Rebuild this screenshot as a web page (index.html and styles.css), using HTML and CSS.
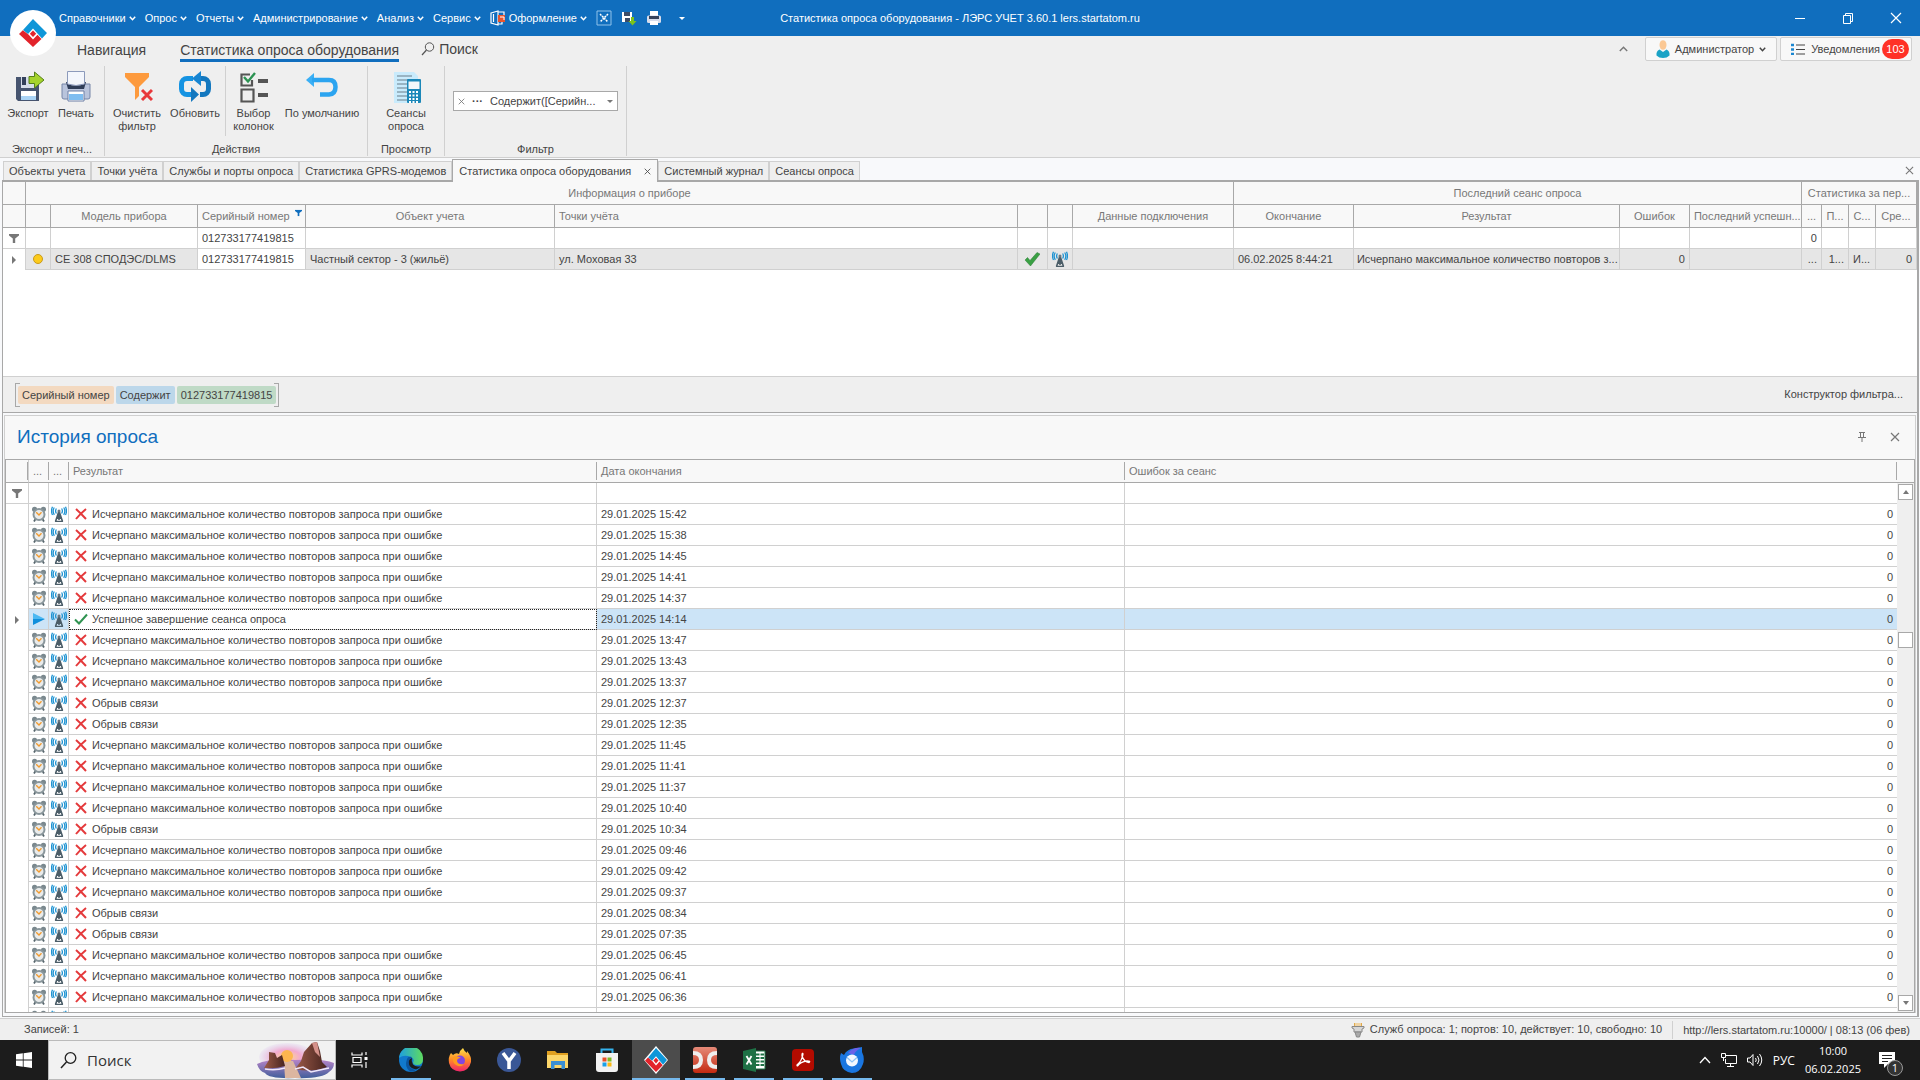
FILE: index.html
```html
<!DOCTYPE html>
<html lang="ru">
<head>
<meta charset="utf-8">
<title>Статистика опроса оборудования - ЛЭРС УЧЕТ</title>
<link rel="stylesheet" href="styles.css">
</head>
<body>
<svg class="sprite" aria-hidden="true">
  <symbol id="chev" viewBox="0 0 7 5"><path d="M.8.8 3.5 3.7 6.2.8" fill="none" stroke="currentColor" stroke-width="1.5"/></symbol>
  <symbol id="cross" viewBox="0 0 10 10"><path d="M1 1 9 9M9 1 1 9" fill="none" stroke="currentColor" stroke-width="1.2"/></symbol>
  <symbol id="funnel" viewBox="0 0 10 9"><path d="M0 0H10V1.5L6.2 4.5V9H3.8V4.5L0 1.5Z" fill="currentColor"/></symbol>
  <symbol id="row-mark" viewBox="0 0 4 8"><path d="M0 0 4 4 0 8Z" fill="currentColor"/></symbol>
  <symbol id="logo" viewBox="0 0 28 28"><path d="M4 11 14 0 28 14 23 19.500 14 9.500 9 15Z" fill="#0f96d8"/><path d="M3.800 11.200 0 15 14 28 22.500 20 18.500 15.800 14 20.500 9.500 15.500Z" fill="#e2232b"/><path d="M14 11.500 17.200 14.700 14 18 10.800 14.700Z" fill="#e2232b"/></symbol>
  <symbol id="antenna" viewBox="0 0 16 16"><path d="M8 5 4.500 15.500M8 5 11.500 15.500M8 6V14M5.500 12.500 10 9.500M10.500 12.500 6 9.500M4 15.500H12" fill="none" stroke="#4b5d68" stroke-width="1.600"/><circle cx="8" cy="5" r="1.500" fill="#6b7780"/><path d="M5.400 2.500Q3.800 5 5.400 7.500M3.300 1.500Q1 5 3.300 8.800M10.600 2.500Q12.200 5 10.600 7.500M12.700 1.500Q15 5 12.700 8.800M1.500.800Q-.500 5 1.500 9M14.500.800Q16.500 5 14.500 9" fill="none" stroke="#1e93d2" stroke-width="1.300"/></symbol>
  <symbol id="clock" viewBox="0 0 16 16"><path d="M4.500 13 3 15.500M11.500 13 13 15.500" stroke="#56656c" stroke-width="1.800"/><circle cx="3.600" cy="3.300" r="2.600" fill="#7a888e"/><circle cx="12.400" cy="3.300" r="2.600" fill="#7a888e"/><circle cx="8" cy="8.500" r="5.500" fill="#e9ebeb" stroke="#8a979c" stroke-width="2"/><path d="M5.200 6.200 8 9 10.500 6.300" fill="none" stroke="#f09a2e" stroke-width="1.300"/></symbol>
  <symbol id="fail" viewBox="0 0 12 12"><path d="M1 1Q6 5.500 11 11M11 1Q5 6 1 11" fill="none" stroke="#e43a3c" stroke-width="2"/></symbol>
  <symbol id="ok" viewBox="0 0 14 12"><path d="M1 6.500 5 10.500 13 1.500" fill="none" stroke="#2e9350" stroke-width="2"/></symbol>
  <symbol id="play" viewBox="0 0 12 12"><path d="M0 0 12 6H0Z" fill="#4bb8f2"/><path d="M0 12 12 6H0Z" fill="#0f8fdc"/></symbol>
</svg>

<header class="titlebar">
  <button class="app-logo" aria-label="Меню приложения"><svg width="28" height="28"><use href="#logo"/></svg></button>
  <nav class="menu">
    <button>Справочники<svg width="7" height="5"><use href="#chev"/></svg></button>
    <button>Опрос<svg width="7" height="5"><use href="#chev"/></svg></button>
    <button>Отчеты<svg width="7" height="5"><use href="#chev"/></svg></button>
    <button>Администрирование<svg width="7" height="5"><use href="#chev"/></svg></button>
    <button>Анализ<svg width="7" height="5"><use href="#chev"/></svg></button>
    <button>Сервис<svg width="7" height="5"><use href="#chev"/></svg></button>
    <button><svg width="16" height="16" viewBox="0 0 16 16"><path d="M1 3 8 1V15L1 13ZM3.500 4V12M8 2H14V5M8 14H12V12" fill="none" stroke="#fff" stroke-width="1.200"/><rect x="8" y="5" width="7" height="7" fill="#e8552d"/><path d="M10 7H14V10" fill="none" stroke="#fff"/></svg>Оформление<svg width="7" height="5"><use href="#chev"/></svg></button>
    <button aria-label="Закрыть все"><svg width="16" height="16" viewBox="0 0 16 16"><path d="M1 1H15V15H1Z" fill="none" stroke="#8fc2ea"/><path d="M4 4 12 12M12 4 4 12" stroke="#fff" stroke-width="1.500" stroke-dasharray="2 .800"/></svg></button>
    <button aria-label="Экспорт"><svg width="16" height="16" viewBox="0 0 16 16"><path d="M1 2H11V12H1Z" fill="#fff"/><path d="M3 2H9V6H3ZM4 8H9V12H4Z" fill="#3d4c66"/><path d="M10 7H13V11H15.500L11.500 15.500 7.500 11H10Z" fill="#7cc21e"/></svg></button>
    <button aria-label="Печать"><svg width="16" height="16" viewBox="0 0 16 16"><path d="M4 1H12V6H4Z" fill="#fff"/><rect x="1" y="5.500" width="14" height="7.500" rx="1.500" fill="#d6dceb"/><path d="M3 6H13V9H3Z" fill="#37435c"/><path d="M4 11H12V15H4Z" fill="#fff"/></svg></button>
    <button aria-label="Настройка панели"><svg width="6" height="3" viewBox="0 0 6 3"><path d="M0 0H6L3 3Z" fill="#fff"/></svg></button>
  </nav>
  <h1>Статистика опроса оборудования - ЛЭРС УЧЕТ 3.60.1 lers.startatom.ru</h1>
  <div class="win-buttons">
    <button aria-label="Свернуть"><svg width="12" height="12"><path d="M1 6.500H11" stroke="#fff"/></svg></button>
    <button aria-label="Восстановить"><svg width="12" height="12"><path d="M1.500 3.500H8.500V11.500H1.500ZM3.500 3.500V1.500H10.500V9.500H8.500" fill="none" stroke="#fff"/></svg></button>
    <button aria-label="Закрыть"><svg width="12" height="12"><path d="M1 1 11 11M11 1 1 11" stroke="#fff" stroke-width="1.200"/></svg></button>
  </div>
</header>

<div class="ribbon-tabs">
  <a href="#">Навигация</a>
  <a href="#" class="current">Статистика опроса оборудования</a>
  <a href="#" class="find"><svg width="14" height="14" viewBox="0 0 14 14"><circle cx="8.500" cy="5" r="4.200" fill="none" stroke="#555"/><path d="M5.500 8 1 13" stroke="#555" stroke-width="1.200"/></svg>Поиск</a>
  <div class="account">
    <button class="collapse" aria-label="Свернуть ленту"><svg width="9" height="6" viewBox="0 0 9 6"><path d="M.8 5 4.500 1.200 8.200 5" fill="none" stroke="#777" stroke-width="1.400"/></svg></button>
    <button class="box"><svg width="14" height="18" viewBox="0 0 14 18"><ellipse cx="7" cy="5" rx="3.500" ry="4.800" fill="#fbc894"/><path d="M3.500 9.500 7 12 10.500 9.500Q14 11 13.500 15.500 11 18 7 18 3 18 .500 15.500 0 11 3.500 9.500Z" fill="#1ba3c6"/></svg>Администратор<svg width="7" height="5"><use href="#chev"/></svg></button>
    <button class="box"><svg width="14" height="12" viewBox="0 0 14 12"><path d="M5 2H14M5 6.500H14M5 11H14" stroke="#444"/><path d="M0 2H3M0 6.500H3M0 11H3" stroke="#1a86d0" stroke-width="2.500"/></svg>Уведомления<span class="count">103</span></button>
  </div>
</div>

<section class="ribbon">
  <div class="group">
    <div class="tools">
      <button class="w48"><svg width="32" height="32" viewBox="0 0 32 32"><path d="M4 6H27V30H6L4 28Z" fill="#46546f"/><path d="M9 6H23V17H9Z" fill="#d7deea"/><path d="M10 6H14V14H10Z" fill="#33405a"/><path d="M9 20H24V29H9Z" fill="#fff"/><path d="M9 25H24V29H9Z" fill="#a9d3f5"/><path d="M17 5.500H22.500V1L32 9 22.500 17V12.500H17Z" fill="#a5d32c" stroke="#557f1b"/></svg>Экспорт</button>
      <button class="w48"><svg width="32" height="32" viewBox="0 0 32 32"><path d="M2 13H30V26Q30 28 28 28H4Q2 28 2 26Z" fill="#b9c4dc" stroke="#7786a8"/><path d="M6 11H26L24 18H8Z" fill="#2f3d58"/><path d="M7.500.500H24.500V13Q16 16 7.500 13Z" fill="#f3f6fc" stroke="#8c9abb"/><path d="M8 20H24V30H8Z" fill="#fff" stroke="#6d7fa5"/><path d="M9 23H23V29H9Z" fill="#7fbdf0"/></svg>Печать</button>
    </div>
    <p>Экспорт и печ...</p>
  </div>
  <div class="group">
    <div class="tools">
      <button class="w56"><svg width="32" height="32" viewBox="0 0 32 32"><path d="M4 2H28V6L18 16V25L14 29V16L4 6Z" fill="#fd9a3d"/><path d="M21 19 31 29M31 19 21 29" stroke="#e8383b" stroke-width="3"/></svg>Очистить<br>фильтр</button>
      <button class="w60"><svg width="32" height="32" viewBox="0 0 32 32"><path d="M14 7.500H8A5.500 5.500 0 0 0 2.500 13V18A5.500 5.500 0 0 0 8 23.500H14" fill="none" stroke="#1593e2" stroke-width="5"/><path d="M18 7.500H24A5.500 5.500 0 0 1 29.500 13V18A5.500 5.500 0 0 1 24 23.500H21" fill="none" stroke="#1478bf" stroke-width="5"/><path d="M22 0V15L13 7.500Z" fill="#1785d2"/><path d="M12 0H14.500V5H12ZM10 10H13V12H10Z" fill="#efefef"/><path d="M12 16V31L20 23.500Z" fill="#1478bf"/></svg>Обновить</button>
      <button class="w56 split"><svg width="32" height="32" viewBox="0 0 32 32"><path d="M14 9V14.500H3.500V3.500H12M3.500 18.500H15.500V30.500H3.500Z" fill="none" stroke="#555" stroke-width="2.200"/><path d="M6 6 10 10.500 17 2" fill="none" stroke="#2c9352" stroke-width="2.400"/><path d="M20 10H30M20 24H30" stroke="#555" stroke-width="4"/></svg>Выбор<br>колонок</button>
      <button class="w82"><svg width="32" height="32" viewBox="0 0 32 32"><path d="M0 9 8 2V16Z" fill="#3aaff5"/><path d="M6 9H23Q29.500 9 29.500 16T23 23.500H14" fill="none" stroke="#2ba4f0" stroke-width="4.500"/></svg>По умолчанию</button>
    </div>
    <p>Действия</p>
  </div>
  <div class="group">
    <div class="tools">
      <button class="w68"><svg width="32" height="32" viewBox="0 0 32 32"><path d="M4 1H24L28 5V32H4Z" fill="#c9ebfc"/><path d="M7 5H22M7 9H22M7 13H19M7 17H19M7 21H19M7 25H19M7 29H19" stroke="#6b7f8a" stroke-width="1.200"/><rect x="17" y="8" width="14" height="24" rx="1" fill="#1b87b8"/><path d="M18.500 10.500H29.500V18H18.500Z" fill="#f3f8fa"/><path d="M19 21H29M19 24.500H29M19 28H29M19 31H29" stroke="#fff" stroke-width="2" stroke-dasharray="2 1.500"/></svg>Сеансы<br>опроса</button>
    </div>
    <p>Просмотр</p>
  </div>
  <div class="group filter-group">
    <div class="tools">
      <button class="combo"><svg width="7" height="7" viewBox="0 0 10 10"><use href="#cross"/></svg><b>···</b><span>Содержит([Серийн...</span><svg width="6" height="3" viewBox="0 0 6 3"><path d="M0 0H6L3 3Z" fill="#777"/></svg></button>
    </div>
    <p>Фильтр</p>
  </div>
</section>

<nav class="doc-tabs">
  <a href="#">Объекты учета</a>
  <a href="#">Точки учёта</a>
  <a href="#">Службы и порты опроса</a>
  <a href="#">Статистика GPRS-модемов</a>
  <a href="#" class="current">Статистика опроса оборудования<svg width="7" height="7" viewBox="0 0 10 10"><use href="#cross"/></svg></a>
  <a href="#">Системный журнал</a>
  <a href="#">Сеансы опроса</a>
  <button aria-label="Закрыть вкладку"><svg width="9" height="9" viewBox="0 0 10 10"><use href="#cross"/></svg></button>
</nav>

<main>
  <div class="devices">
    <table>
      <colgroup><col class="c23"><col class="c25"><col class="c147"><col class="c108"><col class="c249"><col><col class="c30"><col class="c25"><col class="c161"><col class="c120"><col class="c266"><col class="c70"><col class="c112"><col class="c20"><col class="c27"><col class="c27"><col class="c41"></colgroup>
      <thead>
        <tr><th></th><th colspan="8">Информация о приборе</th><th colspan="4">Последний сеанс опроса</th><th colspan="4">Статистика за пер...</th></tr>
        <tr><th></th><th></th><th>Модель прибора</th><th class="filtered">Серийный номер<svg width="7" height="8" viewBox="0 0 10 9"><use href="#funnel"/></svg></th><th>Объект учета</th><th class="left">Точки учёта</th><th></th><th></th><th>Данные подключения</th><th>Окончание</th><th>Результат</th><th>Ошибок</th><th>Последний успешн...</th><th>...</th><th>П...</th><th>С...</th><th>Сре...</th></tr>
      </thead>
      <tbody>
        <tr class="search"><td class="mark"><svg width="10" height="9"><use href="#funnel"/></svg></td><td></td><td></td><td><input type="text" value="012733177419815" aria-label="Серийный номер"></td><td></td><td></td><td></td><td></td><td></td><td></td><td></td><td></td><td></td><td class="num">0</td><td></td><td></td><td></td></tr>
        <tr class="active"><td class="mark"><svg width="4" height="8"><use href="#row-mark"/></svg></td><td class="pic"><i class="dot"></i></td><td>СЕ 308 СПОДЭС/DLMS</td><td class="plain">012733177419815</td><td>Частный сектор - 3 (жильё)</td><td>ул. Моховая 33</td><td class="pic"><svg width="16" height="14" viewBox="0 0 16 14"><path d="M1 8 3.500 5.500 6 8.500 13 .500 16 2 6.500 14Z" fill="#3aa044" stroke="#2a7d34" stroke-width=".5"/></svg></td><td class="pic"><svg width="16" height="16"><use href="#antenna"/></svg></td><td></td><td>06.02.2025 8:44:21</td><td class="tight">Исчерпано максимальное количество повторов з...</td><td class="num">0</td><td></td><td class="num">...</td><td class="num">1...</td><td>И...</td><td class="num">0</td></tr>
      </tbody>
    </table>
  </div>
  <div class="criteria">
    <div class="terms"><span class="field">Серийный номер</span><span class="oper">Содержит</span><span class="value">012733177419815</span></div>
    <button>Конструктор фильтра...</button>
  </div>

  <section class="history">
    <div class="history-head">
      <h2>История опроса</h2>
      <button aria-label="Закрепить"><svg width="8" height="10" viewBox="0 0 8 10"><path d="M1 .500H7M2.500 .500V5M5.500 .500V5M0 5.500H8M4 5.500V10" fill="none" stroke="#777"/></svg></button>
      <button aria-label="Закрыть"><svg width="10" height="10"><use href="#cross"/></svg></button>
    </div>
    <div class="history-grid">
      <table>
        <colgroup><col class="c23"><col class="c20"><col class="c20"><col class="c528"><col class="c528"><col><col class="c17"></colgroup>
        <thead><tr><th class="edge"></th><th>...</th><th>...</th><th>Результат</th><th>Дата окончания</th><th>Ошибок за сеанс</th><th class="end"></th></tr></thead>
        <tbody>
          <tr class="search"><td class="mark"><svg width="10" height="9"><use href="#funnel"/></svg></td><td></td><td></td><td></td><td></td><td></td><td></td></tr>
          <tr><td></td><td class="pic"><svg width="16" height="16"><use href="#clock"/></svg></td><td class="pic"><svg width="16" height="16"><use href="#antenna"/></svg></td><td class="res"><svg width="14" height="12"><use href="#fail"/></svg>Исчерпано максимальное количество повторов запроса при ошибке</td><td>29.01.2025 15:42</td><td class="num">0</td><td></td></tr>
          <tr><td></td><td class="pic"><svg width="16" height="16"><use href="#clock"/></svg></td><td class="pic"><svg width="16" height="16"><use href="#antenna"/></svg></td><td class="res"><svg width="14" height="12"><use href="#fail"/></svg>Исчерпано максимальное количество повторов запроса при ошибке</td><td>29.01.2025 15:38</td><td class="num">0</td><td></td></tr>
          <tr><td></td><td class="pic"><svg width="16" height="16"><use href="#clock"/></svg></td><td class="pic"><svg width="16" height="16"><use href="#antenna"/></svg></td><td class="res"><svg width="14" height="12"><use href="#fail"/></svg>Исчерпано максимальное количество повторов запроса при ошибке</td><td>29.01.2025 14:45</td><td class="num">0</td><td></td></tr>
          <tr><td></td><td class="pic"><svg width="16" height="16"><use href="#clock"/></svg></td><td class="pic"><svg width="16" height="16"><use href="#antenna"/></svg></td><td class="res"><svg width="14" height="12"><use href="#fail"/></svg>Исчерпано максимальное количество повторов запроса при ошибке</td><td>29.01.2025 14:41</td><td class="num">0</td><td></td></tr>
          <tr><td></td><td class="pic"><svg width="16" height="16"><use href="#clock"/></svg></td><td class="pic"><svg width="16" height="16"><use href="#antenna"/></svg></td><td class="res"><svg width="14" height="12"><use href="#fail"/></svg>Исчерпано максимальное количество повторов запроса при ошибке</td><td>29.01.2025 14:37</td><td class="num">0</td><td></td></tr>
          <tr class="selected"><td class="mark"><svg width="4" height="8"><use href="#row-mark"/></svg></td><td class="pic"><svg width="12" height="12"><use href="#play"/></svg></td><td class="pic"><svg width="16" height="16"><use href="#antenna"/></svg></td><td class="res focus"><svg width="14" height="12"><use href="#ok"/></svg>Успешное завершение сеанса опроса</td><td>29.01.2025 14:14</td><td class="num">0</td><td></td></tr>
          <tr><td></td><td class="pic"><svg width="16" height="16"><use href="#clock"/></svg></td><td class="pic"><svg width="16" height="16"><use href="#antenna"/></svg></td><td class="res"><svg width="14" height="12"><use href="#fail"/></svg>Исчерпано максимальное количество повторов запроса при ошибке</td><td>29.01.2025 13:47</td><td class="num">0</td><td></td></tr>
          <tr><td></td><td class="pic"><svg width="16" height="16"><use href="#clock"/></svg></td><td class="pic"><svg width="16" height="16"><use href="#antenna"/></svg></td><td class="res"><svg width="14" height="12"><use href="#fail"/></svg>Исчерпано максимальное количество повторов запроса при ошибке</td><td>29.01.2025 13:43</td><td class="num">0</td><td></td></tr>
          <tr><td></td><td class="pic"><svg width="16" height="16"><use href="#clock"/></svg></td><td class="pic"><svg width="16" height="16"><use href="#antenna"/></svg></td><td class="res"><svg width="14" height="12"><use href="#fail"/></svg>Исчерпано максимальное количество повторов запроса при ошибке</td><td>29.01.2025 13:37</td><td class="num">0</td><td></td></tr>
          <tr><td></td><td class="pic"><svg width="16" height="16"><use href="#clock"/></svg></td><td class="pic"><svg width="16" height="16"><use href="#antenna"/></svg></td><td class="res"><svg width="14" height="12"><use href="#fail"/></svg>Обрыв связи</td><td>29.01.2025 12:37</td><td class="num">0</td><td></td></tr>
          <tr><td></td><td class="pic"><svg width="16" height="16"><use href="#clock"/></svg></td><td class="pic"><svg width="16" height="16"><use href="#antenna"/></svg></td><td class="res"><svg width="14" height="12"><use href="#fail"/></svg>Обрыв связи</td><td>29.01.2025 12:35</td><td class="num">0</td><td></td></tr>
          <tr><td></td><td class="pic"><svg width="16" height="16"><use href="#clock"/></svg></td><td class="pic"><svg width="16" height="16"><use href="#antenna"/></svg></td><td class="res"><svg width="14" height="12"><use href="#fail"/></svg>Исчерпано максимальное количество повторов запроса при ошибке</td><td>29.01.2025 11:45</td><td class="num">0</td><td></td></tr>
          <tr><td></td><td class="pic"><svg width="16" height="16"><use href="#clock"/></svg></td><td class="pic"><svg width="16" height="16"><use href="#antenna"/></svg></td><td class="res"><svg width="14" height="12"><use href="#fail"/></svg>Исчерпано максимальное количество повторов запроса при ошибке</td><td>29.01.2025 11:41</td><td class="num">0</td><td></td></tr>
          <tr><td></td><td class="pic"><svg width="16" height="16"><use href="#clock"/></svg></td><td class="pic"><svg width="16" height="16"><use href="#antenna"/></svg></td><td class="res"><svg width="14" height="12"><use href="#fail"/></svg>Исчерпано максимальное количество повторов запроса при ошибке</td><td>29.01.2025 11:37</td><td class="num">0</td><td></td></tr>
          <tr><td></td><td class="pic"><svg width="16" height="16"><use href="#clock"/></svg></td><td class="pic"><svg width="16" height="16"><use href="#antenna"/></svg></td><td class="res"><svg width="14" height="12"><use href="#fail"/></svg>Исчерпано максимальное количество повторов запроса при ошибке</td><td>29.01.2025 10:40</td><td class="num">0</td><td></td></tr>
          <tr><td></td><td class="pic"><svg width="16" height="16"><use href="#clock"/></svg></td><td class="pic"><svg width="16" height="16"><use href="#antenna"/></svg></td><td class="res"><svg width="14" height="12"><use href="#fail"/></svg>Обрыв связи</td><td>29.01.2025 10:34</td><td class="num">0</td><td></td></tr>
          <tr><td></td><td class="pic"><svg width="16" height="16"><use href="#clock"/></svg></td><td class="pic"><svg width="16" height="16"><use href="#antenna"/></svg></td><td class="res"><svg width="14" height="12"><use href="#fail"/></svg>Исчерпано максимальное количество повторов запроса при ошибке</td><td>29.01.2025 09:46</td><td class="num">0</td><td></td></tr>
          <tr><td></td><td class="pic"><svg width="16" height="16"><use href="#clock"/></svg></td><td class="pic"><svg width="16" height="16"><use href="#antenna"/></svg></td><td class="res"><svg width="14" height="12"><use href="#fail"/></svg>Исчерпано максимальное количество повторов запроса при ошибке</td><td>29.01.2025 09:42</td><td class="num">0</td><td></td></tr>
          <tr><td></td><td class="pic"><svg width="16" height="16"><use href="#clock"/></svg></td><td class="pic"><svg width="16" height="16"><use href="#antenna"/></svg></td><td class="res"><svg width="14" height="12"><use href="#fail"/></svg>Исчерпано максимальное количество повторов запроса при ошибке</td><td>29.01.2025 09:37</td><td class="num">0</td><td></td></tr>
          <tr><td></td><td class="pic"><svg width="16" height="16"><use href="#clock"/></svg></td><td class="pic"><svg width="16" height="16"><use href="#antenna"/></svg></td><td class="res"><svg width="14" height="12"><use href="#fail"/></svg>Обрыв связи</td><td>29.01.2025 08:34</td><td class="num">0</td><td></td></tr>
          <tr><td></td><td class="pic"><svg width="16" height="16"><use href="#clock"/></svg></td><td class="pic"><svg width="16" height="16"><use href="#antenna"/></svg></td><td class="res"><svg width="14" height="12"><use href="#fail"/></svg>Обрыв связи</td><td>29.01.2025 07:35</td><td class="num">0</td><td></td></tr>
          <tr><td></td><td class="pic"><svg width="16" height="16"><use href="#clock"/></svg></td><td class="pic"><svg width="16" height="16"><use href="#antenna"/></svg></td><td class="res"><svg width="14" height="12"><use href="#fail"/></svg>Исчерпано максимальное количество повторов запроса при ошибке</td><td>29.01.2025 06:45</td><td class="num">0</td><td></td></tr>
          <tr><td></td><td class="pic"><svg width="16" height="16"><use href="#clock"/></svg></td><td class="pic"><svg width="16" height="16"><use href="#antenna"/></svg></td><td class="res"><svg width="14" height="12"><use href="#fail"/></svg>Исчерпано максимальное количество повторов запроса при ошибке</td><td>29.01.2025 06:41</td><td class="num">0</td><td></td></tr>
          <tr><td></td><td class="pic"><svg width="16" height="16"><use href="#clock"/></svg></td><td class="pic"><svg width="16" height="16"><use href="#antenna"/></svg></td><td class="res"><svg width="14" height="12"><use href="#fail"/></svg>Исчерпано максимальное количество повторов запроса при ошибке</td><td>29.01.2025 06:36</td><td class="num">0</td><td></td></tr>
          <tr><td></td><td class="pic"><svg width="16" height="16"><use href="#clock"/></svg></td><td class="pic"><svg width="16" height="16"><use href="#antenna"/></svg></td><td></td><td></td><td></td><td></td></tr>
        </tbody>
      </table>
      <div class="scroll">
        <button aria-label="Вверх"><svg width="6" height="4" viewBox="0 0 6 4"><path d="M3 0 6 4H0Z" fill="#777"/></svg></button>
        <div class="track"><div class="thumb"></div></div>
        <button aria-label="Вниз"><svg width="6" height="4" viewBox="0 0 6 4"><path d="M0 0H6L3 4Z" fill="#777"/></svg></button>
      </div>
    </div>
  </section>
</main>

<footer class="status">
  <span>Записей: 1</span>
  <span class="ports"><svg width="14" height="16" viewBox="0 0 14 16"><path d="M3 1H11V5H3Z" fill="#e0a94a"/><path d="M5 1V5M7 1V5M9 1V5" stroke="#fff"/><path d="M1 4.500H13V6L11 7V10H3V7L1 6Z" fill="#d6d6d6" stroke="#888"/><path d="M4 10H10L8.500 15H5.500Z" fill="#a9a9a9" stroke="#888"/></svg>Служб опроса: 1; портов: 10, действует: 10, свободно: 10</span>
  <span class="server">http://lers.startatom.ru:10000/ | 08:13 (06 фев)</span>
</footer>

<footer class="taskbar">
  <button class="start" aria-label="Пуск"><svg width="16" height="16" viewBox="0 0 16 16"><path d="M0 2.300 6.800 1.300V7.600H0ZM7.600 1.200 16 0V7.600H7.600ZM0 8.400H6.800V14.700L0 13.700ZM7.600 8.400H16V16L7.600 14.800Z" fill="#fff"/></svg></button>
  <label class="find-box"><svg width="17" height="17" viewBox="0 0 17 17"><circle cx="10.500" cy="6" r="5.300" fill="none" stroke="#222" stroke-width="1.300"/><path d="M6.500 10 1 16" stroke="#222" stroke-width="1.500"/></svg><input type="text" placeholder="Поиск" aria-label="Поиск">
    <svg width="78" height="38" viewBox="0 0 78 38"><defs><radialGradient id="glow"><stop offset="0" stop-color="#ffd98a"/><stop offset=".5" stop-color="#f2a9cf"/><stop offset="1" stop-color="#dcc6ee" stop-opacity=".2"/></radialGradient><linearGradient id="sea" x2="0" y2="1"><stop offset="0" stop-color="#b884c8"/><stop offset="1" stop-color="#415f9c"/></linearGradient><linearGradient id="rock"><stop offset="0" stop-color="#9c5a48"/><stop offset="1" stop-color="#47241f"/></linearGradient></defs><ellipse cx="30" cy="16" rx="28" ry="14" fill="url(#glow)"/><path d="M0 23Q12 17 38 19 66 17 77 22 77 28 72 31 65 38 38 37 12 38 8 32 2 30 0 23Z" fill="url(#sea)"/><path d="M27 20H36L44 37H28Z" fill="#dcb6a0"/><circle cx="30" cy="15" r="6" fill="#fdb64e"/><path d="M7 27 12 19V11L18 12 20 17 25 14 28 25Q18 28 7 27Z" fill="url(#rock)"/><path d="M38 28 44 20 47 11 55 2 60 1 63 10 65 21 70 26Q55 32 38 28Z" fill="url(#rock)"/><path d="M55 2 60 1 63 16 58 11Z" fill="#d5918a"/><path d="M8 28Q18 30 28 27M38 28 46 26 54 31 72 27" fill="none" stroke="#efe6fa" stroke-width="1.500"/></svg></label>
  <button class="task view" aria-label="Представление задач"><svg width="18" height="18" viewBox="0 0 18 18"><path d="M1 1.500V4H11V1.500M1 16.500V14H11V16.500M2 6.500H10V11.500H2ZM15 1V4M15 11V17" fill="none" stroke="#fff" stroke-width="1.200"/><rect x="13.500" y="6" width="3" height="3" fill="#fff"/></svg></button>
  <button class="task open" aria-label="Edge"><svg width="24" height="24" viewBox="0 0 24 24"><defs><linearGradient id="e1"><stop offset="0" stop-color="#1d9fe0"/><stop offset="1" stop-color="#5fdc5f"/></linearGradient></defs><circle cx="12" cy="12" r="12" fill="#1179cd"/><path d="M0 10A12 12 0 0 1 24 11Q24 17 18 17 14 17 14 14.500 16 11 12 9 5 6 0 10Z" fill="url(#e1)"/><path d="M9 12Q8 20 17 21.500 20 21 22 18 17 19.500 14 16.500 12 13 13 10Z" fill="#1c1c1c"/><path d="M8 11Q9 8 13 9 7 14 12 20 16 23 18 21 15 24 11 23.500 5 19 8 11Z" fill="#0b559f"/></svg></button>
  <button class="task" aria-label="Firefox"><svg width="24" height="24" viewBox="0 0 24 24"><defs><linearGradient id="f1" x2="0" y2="1"><stop offset="0" stop-color="#ffe14a"/><stop offset=".5" stop-color="#ff8a26"/><stop offset="1" stop-color="#f0246a"/></linearGradient></defs><path d="M3 5 5 7Q8 4 11 6 12 2 15 0 16 3 19 5V3Q24 9 23 14 21 23 12 23.500 3 23 1 15 0 9 3 5Z" fill="url(#f1)"/><circle cx="12" cy="12.500" r="5" fill="#8246e0"/><path d="M5 9Q9 7 13 10 9 10 9 13 10 17 16 16 13 20 8 17 4 14 5 9Z" fill="#ff9a1f"/></svg></button>
  <button class="task" aria-label="Yandex"><svg width="24" height="24" viewBox="0 0 24 24"><circle cx="12" cy="12" r="12" fill="#3a5796"/><path d="M6 5 12 13 18 5M12 13V21" fill="none" stroke="#fff" stroke-width="3.500"/></svg></button>
  <button class="task" aria-label="Проводник"><svg width="24" height="24" viewBox="0 0 24 24"><path d="M1 3H9L11 5H22V20H1Z" fill="#e0a021"/><path d="M1 7H22V20H1Z" fill="#fcd66a"/><path d="M5 21V13H19V21H15.500V17H8.500V21Z" fill="#3a8fd4"/></svg></button>
  <button class="task" aria-label="Магазин"><svg width="24" height="24" viewBox="0 0 24 24"><path d="M6.500 6V1.500H17.500V6" fill="none" stroke="#35b3ee" stroke-width="2"/><path d="M1 5H23V21Q23 24 20 24H4Q1 24 1 21Z" fill="#f2f2f2"/><path d="M7.500 9.500H11.500V13.500H7.500Z" fill="#e8502a"/><path d="M12.500 9.500H16.500V13.500H12.500Z" fill="#7fba22"/><path d="M7.500 14.500H11.500V18.500H7.500Z" fill="#18a0e8"/><path d="M12.500 14.500H16.500V18.500H12.500Z" fill="#fbb813"/></svg></button>
  <button class="task open focused" aria-label="ЛЭРС УЧЕТ"><svg width="24" height="28" viewBox="0 0 24 28"><path d="M12 0 24 14 12 28 0 14Z" fill="#fff"/><svg x="1" y="2" width="22" height="24" viewBox="0 0 28 28" preserveAspectRatio="none"><use href="#logo" width="28" height="28"/></svg></svg></button>
  <button class="task open" aria-label="Терминал"><svg width="24" height="26" viewBox="0 0 24 26"><defs><linearGradient id="d1" x2="0" y2="1"><stop offset="0" stop-color="#e58a78"/><stop offset="1" stop-color="#c42a12"/></linearGradient></defs><rect width="24" height="26" rx="3" fill="url(#d1)"/><path d="M0 6Q8 6 8 13T0 20M24 6Q16 6 16 13T24 20" fill="none" stroke="#eee" stroke-width="4"/></svg></button>
  <button class="task open" aria-label="Excel"><svg width="24" height="24" viewBox="0 0 24 24"><path d="M12 3H23V21H12Z" fill="#fff" stroke="#1e7145"/><path d="M14 6.500H22M14 10H22M14 13.500H22M14 17H22" stroke="#1e7145" stroke-width="2" stroke-dasharray="3.500 1"/><path d="M1 3 14 0V24L1 21Z" fill="#1e7145"/><path d="M4.500 8 9.500 16.500M9.500 8 4.500 16.500" stroke="#fff" stroke-width="1.800"/></svg></button>
  <button class="task open" aria-label="Acrobat"><svg width="24" height="24" viewBox="0 0 24 24"><rect x="1" y="1" width="22" height="22" rx="4" fill="#b30b00"/><path d="M6 17Q11 13 12 6 11 4 11 8 13 14 18 14.500 20 13 16 13 9 14 7 17.500 6 18.500 6 17Z" fill="none" stroke="#fff" stroke-width="1.300"/></svg></button>
  <button class="task open" aria-label="Thunderbird"><svg width="24" height="26" viewBox="0 0 24 26"><path d="M1 6 4 8Q7 2 14 1.500L22 0V5Q25 11 23 17 20 26 12 26 3 25 1 17 -1 11 1 6Z" fill="#1a76e0"/><path d="M8 6Q13 0 21 1 15 4 14 8Z" fill="#6a62e8"/><ellipse cx="12" cy="13.500" rx="6" ry="6" fill="#f4f8ff"/><path d="M7 10.500 12 15 17 10.500" fill="none" stroke="#8fc4f5" stroke-width="1.300"/></svg></button>
  <div class="tray">
    <svg width="12" height="8" viewBox="0 0 12 8"><path d="M1 7 6 1.500 11 7" fill="none" stroke="#fff" stroke-width="1.300"/></svg>
    <svg width="16" height="14" viewBox="0 0 16 14"><path d="M5 2.500H15.500V10.500H4.500V6M6 13.500H13M9.500 10.500V13.500M.500.500H4.500V4.500H.500ZM2.500 4.500V8" fill="none" stroke="#fff"/></svg>
    <svg width="16" height="14" viewBox="0 0 16 14"><path d="M.500 5H3L6 1.500V12.500L3 9H.500ZM8.500 5Q10 7 8.500 9M10.500 3Q13.500 7 10.500 11M12.500 1Q17 7 12.500 13" fill="none" stroke="#fff"/></svg>
    <span>РУС</span>
    <time>10:00<br>06.02.2025</time>
    <button class="notes" aria-label="Уведомления"><svg width="16" height="16" viewBox="0 0 16 16"><path d="M0 0H16V12H9L5 16V12H0Z" fill="#fff"/><path d="M3 3.500H13M3 6.500H13M3 9.500H9" stroke="#222"/></svg><b>1</b></button>
  </div>
</footer>
</body>
</html>
```
FILE: styles.css
```css
* { box-sizing: border-box; }

body {
  --blue: #106ebe;
  --line: #a8a8a8;
  --soft: #d0d0d0;
  --panel: #efefef;
  --head: #f8f8f8;
  margin: 0;
  height: 100vh;
  display: flex;
  flex-direction: column;
  overflow: hidden;
  background: #f8f9fb;
  color: #444;
  font: 11px/13px "Liberation Sans", Arial, sans-serif;
}

button, input { font: inherit; color: inherit; border: 0; background: none; padding: 0; margin: 0; }
a { color: inherit; text-decoration: none; }
h1, h2, p { margin: 0; font-weight: 400; }
svg { flex: none; display: block; }
.sprite { position: absolute; width: 0; height: 0; }

/* title bar */
.titlebar {
  position: relative;
  flex: none;
  height: 36px;
  display: flex;
  align-items: center;
  padding-left: 59px;
  background: var(--blue);
  color: #fff;
}
.app-logo {
  position: absolute;
  left: 10px;
  top: 10px;
  width: 46px;
  height: 46px;
  display: grid;
  place-items: center;
  border-radius: 50%;
  background: #fff;
}
.menu { flex: 1 0 0; min-width: 0; display: flex; align-items: center; gap: 9px; }
.menu button { display: flex; align-items: center; gap: 3px; white-space: nowrap; }
.menu button:last-child { margin-left: 8px; }
h1 { font-size: 11px; white-space: nowrap; }
.win-buttons { flex: 1 0 59px; min-width: 0; display: flex; justify-content: flex-end; }
.win-buttons button { width: 48px; height: 36px; display: grid; place-items: center; }

/* ribbon */
.ribbon-tabs {
  flex: none;
  height: 26px;
  display: flex;
  align-items: center;
  gap: 34px;
  padding: 0 8px 0 77px;
  background: var(--panel);
  font-size: 14px;
}
.ribbon-tabs a { height: 26px; line-height: 28px; white-space: nowrap; }
.ribbon-tabs .current { border-bottom: 3px solid var(--blue); }
.ribbon-tabs .find { display: flex; align-items: center; gap: 4px; margin-left: -12px; }
.account { margin-left: auto; display: flex; align-items: center; gap: 3px; font-size: 11px; }
.collapse { margin-right: 14px; }
.box {
  height: 24px;
  display: flex;
  align-items: center;
  gap: 5px;
  padding: 0 10px;
  border: 1px solid var(--soft);
  border-radius: 2px;
  background: var(--head);
}
.box:last-child { padding-right: 2px; gap: 6px; }
.count {
  width: 27px;
  height: 20px;
  margin-left: -4px;
  line-height: 20px;
  border-radius: 10px;
  background: #ff3126;
  color: #fff;
}
.ribbon {
  flex: none;
  height: 96px;
  display: flex;
  padding: 4px 0 1px;
  border-bottom: 1px solid var(--soft);
  background: var(--panel);
}
.group {
  display: flex;
  flex-direction: column;
  justify-content: space-between;
  padding: 0 4px;
  border-right: 1px solid var(--soft);
  text-align: center;
}
.group p { line-height: 14px; }
.tools { display: flex; height: 70px; }
.tools button {
  display: flex;
  flex-direction: column;
  align-items: center;
  padding-top: 5px;
  white-space: nowrap;
}
.tools svg { margin-bottom: 4px; }
.w48 { width: 48px; }
.w56 { width: 56px; }
.w60 { width: 60px; }
.w68 { width: 68px; }
.w82 { width: 82px; }
.tools .split { border-left: 1px solid var(--soft); }
.filter-group { padding: 0 8px; }
.filter-group .tools { align-items: center; }
.tools .combo {
  width: 165px;
  height: 20px;
  flex-direction: row;
  gap: 7px;
  padding: 0 4px;
  border: 1px solid var(--line);
  background: #fff;
}
.combo svg { margin: 0; color: #777; }
.combo span { margin-right: auto; }

/* document tabs */
.doc-tabs {
  flex: none;
  height: 22px;
  display: flex;
  align-items: flex-end;
  padding: 0 6px 0 3px;
}
.doc-tabs a {
  height: 19px;
  padding: 0 5px;
  line-height: 19px;
  border: 1px solid var(--soft);
  border-width: 1px 1px 0;
  background: var(--panel);
  white-space: nowrap;
}
.doc-tabs .current {
  position: relative;
  height: 23px;
  margin-bottom: -2px;
  display: flex;
  align-items: center;
  gap: 13px;
  padding: 0 6px;
  border-color: var(--line);
  background: var(--head);
}
.doc-tabs button { margin: 0 0 5px auto; color: #777; }

/* working area */
main {
  flex: 1;
  min-height: 0;
  display: flex;
  flex-direction: column;
  margin: 0 1px 1px 2px;
  border: solid var(--line);
  border-width: 2px 2px 1px 1px;
}
.devices { flex: none; min-height: 194px; background: #fff; }
table { width: 100%; table-layout: fixed; border-collapse: separate; border-spacing: 0; }
th, td {
  height: 21px;
  padding: 0 4px;
  overflow: hidden;
  white-space: nowrap;
  border: solid var(--soft);
  border-width: 0 1px 1px 0;
}
th {
  height: 23px;
  border-color: var(--line);
  background: var(--head);
  color: #777;
  font-weight: 400;
}
.left { text-align: left; }
.filtered { position: relative; text-align: left; }
.filtered svg { position: absolute; right: 3px; top: 4px; color: var(--blue); }
td input { width: 100%; display: block; }
.num { text-align: right; }
.tight { padding: 0 0 0 3px; }
.mark { color: #777; }
.mark svg, .pic svg { margin: auto; }
.pic { padding: 0; }
tbody tr:not(.search) td:first-child { border-bottom: 0; }
.active td { background: #e6e6e6; }
.active .mark, .active .plain { background: #fff; }
.dot {
  display: block;
  width: 10px;
  height: 10px;
  margin: auto;
  border: 1px solid #c99a1c;
  border-radius: 50%;
  background: #fccb1c;
}
.c17 { width: 17px; }
.c20 { width: 20px; }
.c23 { width: 23px; }
.c25 { width: 25px; }
.c27 { width: 27px; }
.c30 { width: 30px; }
.c41 { width: 41px; }
.c70 { width: 70px; }
.c108 { width: 108px; }
.c112 { width: 112px; }
.c120 { width: 120px; }
.c147 { width: 147px; }
.c161 { width: 161px; }
.c249 { width: 249px; }
.c266 { width: 266px; }
.c528 { width: 528px; }

.criteria {
  flex: none;
  height: 37px;
  display: flex;
  align-items: center;
  justify-content: space-between;
  padding: 0 14px 0 12px;
  border: solid var(--line);
  border-width: 1px 0;
  border-top-color: var(--soft);
  background: var(--panel);
}
.terms {
  position: relative;
  display: flex;
  gap: 2px;
  padding: 3px;
  line-height: 18px;
}
/* square brackets round the condition */
.terms::before, .terms::after {
  content: "";
  position: absolute;
  top: 0;
  bottom: 0;
  width: 4px;
  border: 1px solid var(--line);
}
.terms::before { left: 0; border-right: 0; }
.terms::after { right: 0; border-left: 0; }
.terms span { position: relative; z-index: 1; padding: 0 4px; border-radius: 2px; }
.field { background: #f3d9c0; }
.oper { background: #bcd7ea; }
.value { background: #bfdac6; }

/* history panel */
.history {
  flex: 1;
  min-height: 0;
  display: flex;
  flex-direction: column;
  margin: 2px 1px 3px;
  border: 1px solid var(--soft);
  border-bottom: 0;
  background: var(--head);
}
.history-head {
  height: 43px;
  flex: none;
  display: flex;
  align-items: center;
  gap: 24px;
  padding: 0 15px 2px 12px;
}
h2 { margin-right: auto; color: var(--blue); font-size: 19px; line-height: 24px; }
.history-head button { color: #777; }
.history-grid {
  position: relative;
  flex: 1;
  min-height: 0;
  overflow: hidden;
  border: 1px solid var(--line);
  background: #fff;
}
.history th {
  padding-left: 4px;
  border-right: 0;
  text-align: left;
  background: linear-gradient(var(--line), var(--line)) right center / 1px 18px no-repeat var(--head);
}
.history .edge { border-right: 1px solid var(--soft); }
.history .end { background: var(--head); }
.history td { padding: 0 4px; }
.history td.pic { padding: 0; }
.history td:nth-child(6) { border-right: 0; }
.res svg { display: inline-block; vertical-align: middle; margin: -2px 4px 0 1px; }
.selected td { background: #cce4f7; }
.selected .mark, .selected .focus { background: #fff; }
.focus { outline: 1px dotted #222; outline-offset: -1px; }
.scroll {
  position: absolute;
  top: 23px;
  right: 0;
  bottom: 0;
  width: 17px;
  display: flex;
  flex-direction: column;
  padding: 1px;
  background: var(--panel);
}
.scroll button, .thumb {
  height: 16px;
  display: grid;
  place-items: center;
  border: 1px solid var(--line);
  background: #fff;
}
.track { flex: 1; padding-top: 132px; }

/* status bar */
.status {
  flex: none;
  height: 22px;
  display: flex;
  align-items: center;
  padding: 0 10px 0 24px;
  border-top: 1px solid var(--soft);
  background: var(--panel);
}
.ports { margin-left: auto; display: flex; align-items: center; gap: 5px; }
.server { margin-left: 10px; padding-left: 10px; border-left: 1px solid var(--soft); line-height: 18px; }

/* taskbar */
.taskbar {
  flex: none;
  height: 40px;
  display: flex;
  background: #1c1c1c;
  color: #fff;
  font-family: "Open Sans", "Noto Sans", sans-serif;
}
.start { width: 48px; display: grid; place-items: center; }
.find-box {
  width: 288px;
  display: flex;
  align-items: center;
  gap: 10px;
  padding: 0 0 0 11px;
  border: 1px solid #bbb;
  background: #f2f2f2;
}
.find-box input { flex: 1; min-width: 0; font-size: 15px; line-height: 20px; color: #222; }
.find-box input::placeholder { color: #333; opacity: 1; }
.task {
  width: 40px;
  display: grid;
  place-items: center;
  margin-right: 9px;
  border: solid transparent;
  border-width: 2px 0;
}
.view { width: 48px; margin-right: 7px; }
.open { border-bottom-color: #76b9ed; }
.task.focused { width: 48px; margin: 0 5px 0 -4px; background: #4c4c4c; border-top-color: #4c4c4c; }
.tray { margin-left: auto; display: flex; align-items: center; gap: 10px; padding-right: 25px; font-size: 11px; }
.tray span { font-size: 12px; }
.tray time { line-height: 18px; text-align: center; }
.notes { position: relative; margin-left: 8px; }
.notes b {
  position: absolute;
  left: 8px;
  top: 8px;
  width: 16px;
  height: 16px;
  border: 1px solid #999;
  border-radius: 50%;
  background: #333;
  font-weight: 400;
  line-height: 14px;
}
```
